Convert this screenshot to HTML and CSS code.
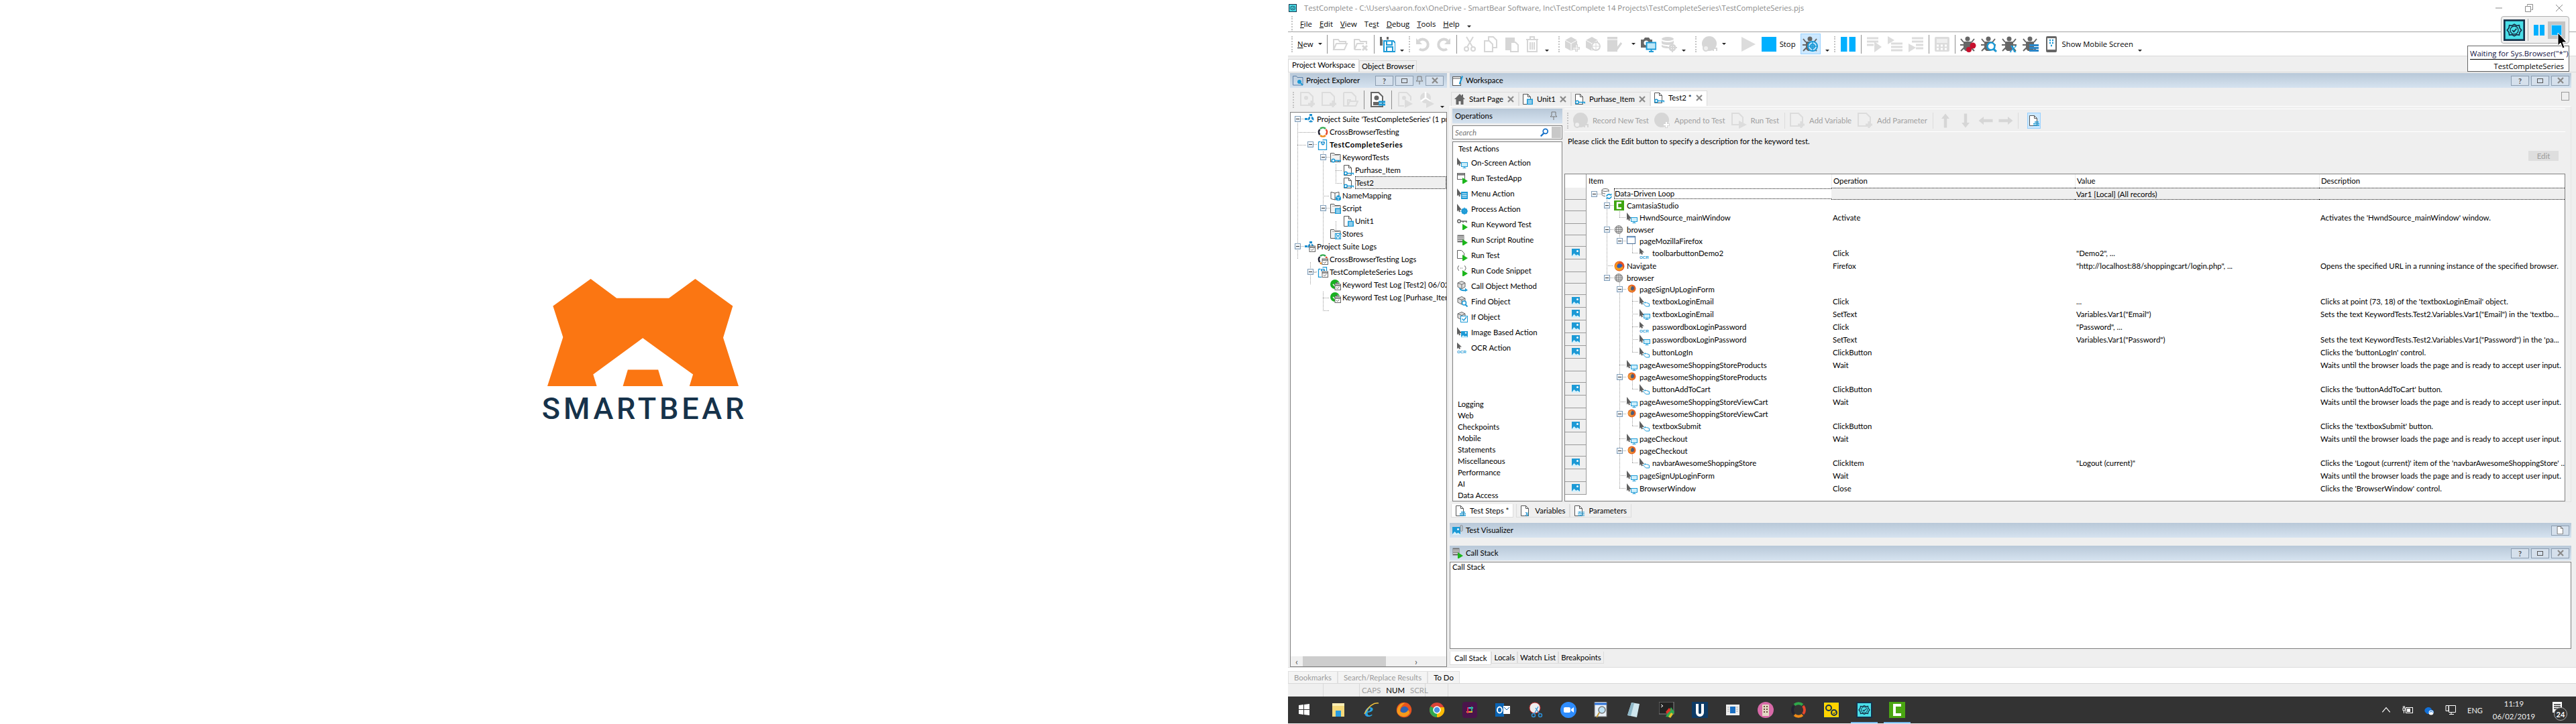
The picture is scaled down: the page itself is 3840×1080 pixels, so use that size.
FILE: index.html
```html
<!DOCTYPE html>
<html lang="en">
<head>
<meta charset="utf-8">
<title>TestComplete</title>
<link rel="stylesheet" href="styles.css">
</head>
<body>
<svg class="defs" width="0" height="0" aria-hidden="true">
<defs>
<!-- 16px primitives -->
<symbol id="cur" viewBox="0 0 16 16"><path d="M0 0v11.500l2-2 1 3 2-1-1-2.500h3z" fill="#5f5f5f"/><rect x="6.500" y="7.500" width="9" height="6" fill="#cdeefa" stroke="#1c9ad6"/><path d="M8.500 15.500h5M11 14v1.500" stroke="#1c9ad6"/></symbol>
<symbol id="screen" viewBox="0 0 16 16"><path d="M0 0v11.500l2-2 1 3 2-1-1-2.500h3z" fill="#5f5f5f"/><rect x="6.500" y="7.500" width="9" height="6" fill="#cdeefa" stroke="#1c9ad6"/><path d="M8.500 15.500h5M11 14v1.500" stroke="#1c9ad6"/></symbol>
<symbol id="hand" viewBox="0 0 16 16"><path d="M0 0v11.500l2-2 1 3 2-1-1-2.500h3z" fill="#5f5f5f"/><path d="M5.500 11l3-2.500v1.500l2-.5 4 1.500v4h-5z" fill="#fff" stroke="#1c9ad6"/></symbol>
<symbol id="ocr" viewBox="0 0 16 16"><path d="M0 0v9.500l2-2 1 2.500 2-1-1-2.500h3z" fill="#5f5f5f"/><text x="0" y="15.500" font-family="Liberation Sans" font-weight="700" font-size="6.200" fill="#1c9ad6">OCR</text></symbol>
<symbol id="gearcur" viewBox="0 0 16 16"><path d="M0 0v11.500l2-2 1 3 2-1-1-2.500h3z" fill="#5f5f5f"/><circle cx="11" cy="11" r="3.300" fill="none" stroke="#1c9ad6" stroke-width="2.600"/><path d="M11 5.500v11M5.500 11h11M7.500 7.500l7 7M14.500 7.500l-7 7" stroke="#1c9ad6" stroke-width="1.200"/></symbol>
<symbol id="menucur" viewBox="0 0 16 16"><path d="M0 0v11.500l2-2 1 3 2-1-1-2.500h3z" fill="#5f5f5f"/><rect x="6" y="5" width="10" height="11" fill="#1c9ad6"/><path d="M7.500 8h7M7.500 10.500h7M7.500 13h7" stroke="#fff"/></symbol>
<symbol id="imgcur" viewBox="0 0 16 16"><path d="M0 0v11.500l2-2 1 3 2-1-1-2.500h3z" fill="#5f5f5f"/><rect x="6" y="6" width="10" height="10" fill="#1c9ad6"/><circle cx="13" cy="8.500" r="1.200" fill="#fff"/><path d="M6 15l3-3 2.500 2 2-1 2.500 2v1H6z" fill="#cfeefa"/></symbol>
<symbol id="runapp" viewBox="0 0 16 16"><rect x=".500" y=".500" width="11" height="9" fill="#fff" stroke="#5f5f5f"/><path d="M1 2.500h10" stroke="#5f5f5f" stroke-width="2"/><path d="M8 7l8 5-8 5z" fill="#1cb61c"/></symbol>
<symbol id="runkey" viewBox="0 0 16 16"><circle cx="3" cy="3" r="2.300" fill="none" stroke="#5f5f5f" stroke-width="1.500"/><path d="M5 3h9v2M9 3v2" stroke="#5f5f5f" stroke-width="1.500" fill="none"/><path d="M8 7l8 5-8 5z" fill="#1cb61c"/></symbol>
<symbol id="runscript" viewBox="0 0 16 16"><rect x=".500" y=".500" width="10" height="11" fill="#777"/><path d="M1 3.500h9M1 6h9M1 8.500h9" stroke="#fff"/><path d="M8 7l8 5-8 5z" fill="#1cb61c"/></symbol>
<symbol id="rundoc" viewBox="0 0 16 16"><path d="M.5.500h6l4 4v8H.5z" fill="#fff" stroke="#5f5f5f"/><path d="M8 7l8 5-8 5z" fill="#1cb61c"/></symbol>
<symbol id="runsnip" viewBox="0 0 16 16"><path d="M3 .5c-2 0-1 3.500-2.500 3.500 1.500 0 .5 3.500 2.500 3.500M11 .5c2 0 1 3.500 2.500 3.500-1.500 0-.5 3.500-2.500 3.500" fill="none" stroke="#5f5f5f"/><path d="M5 4h4" stroke="#5f5f5f" stroke-dasharray="1 1"/><path d="M8 7l8 5-8 5z" fill="#1cb61c"/></symbol>
<symbol id="cube" viewBox="0 0 16 16"><path d="M1 3l6-2.500 5 2.500v6l-5 3-6-3z" fill="#ddd" stroke="#666"/><path d="M1 3l6 2.500 5-2.500M7 5.500v6" fill="none" stroke="#666"/></symbol>
<symbol id="callobj" viewBox="0 0 16 16"><use href="#cube" width="16" height="16"/><path d="M4 11c1 3 5 3.500 9 3" fill="none" stroke="#1c9ad6" stroke-width="2"/><path d="M12 10.500l4 3.500-4 2z" fill="#1c9ad6"/></symbol>
<symbol id="findobj" viewBox="0 0 16 16"><use href="#cube" width="16" height="16"/><circle cx="10.500" cy="10" r="3" fill="#fff" stroke="#1c9ad6" stroke-width="1.500"/><path d="M12.500 12.500l3 3" stroke="#1c9ad6" stroke-width="2"/></symbol>
<symbol id="ifobj" viewBox="0 0 16 16"><use href="#cube" width="16" height="16"/><rect x="5.500" y="6.500" width="10" height="9" fill="#fff" stroke="#1c9ad6"/><path d="M7.500 10.500l2.500 2.500 4-5" fill="none" stroke="#1c9ad6" stroke-width="1.500"/></symbol>
<symbol id="docbase" viewBox="0 0 16 16"><path d="M1.500.5h7l4 4v11h-11z" fill="#fff" stroke="#555"/><path d="M8.500.5v4h4" fill="none" stroke="#555"/></symbol>
<symbol id="dockey" viewBox="0 0 16 16"><use href="#docbase" width="16" height="16"/><circle cx="4" cy="12.500" r="2.300" fill="#fff" stroke="#1c9ad6" stroke-width="1.600"/><path d="M6 12.500h9.500v2M12 12.500v2" fill="none" stroke="#1c9ad6" stroke-width="1.600"/></symbol>
<symbol id="docscript" viewBox="0 0 16 16"><use href="#docbase" width="16" height="16"/><rect x="7" y="7.500" width="9" height="8.500" fill="#1c9ad6"/><path d="M8.500 10h6M8.500 12h6M8.500 14h6" stroke="#fff"/></symbol>
<symbol id="folder" viewBox="0 0 16 16"><path d="M.5 14.500V1.500h5l1.500 2h8v11z" fill="#f2f2f2" stroke="#555"/><path d="M3 4.500h10" stroke="#aaa"/></symbol>
<symbol id="fkey" viewBox="0 0 16 16"><use href="#folder" width="16" height="16"/><circle cx="4.500" cy="12.500" r="2.300" fill="#fff" stroke="#1c9ad6" stroke-width="1.600"/><path d="M6.500 12.500h9.500v2M12 12.500v2" fill="none" stroke="#1c9ad6" stroke-width="1.600"/></symbol>
<symbol id="fscript" viewBox="0 0 16 16"><use href="#folder" width="16" height="16"/><rect x="7" y="7.500" width="9" height="8.500" fill="#1c9ad6"/><path d="M8.500 10h6M8.500 12h6M8.500 14h6" stroke="#fff"/></symbol>
<symbol id="fstore" viewBox="0 0 16 16"><use href="#folder" width="16" height="16"/><rect x="7.500" y="7.500" width="8" height="8" fill="#fff" stroke="#1c9ad6" stroke-width="1.200"/><path d="M9.500 8v2.500h4V8M9.500 15v-3h4v3" fill="none" stroke="#1c9ad6"/></symbol>
<symbol id="book" viewBox="0 0 16 16"><path d="M1 2.500l6 1.500 6-1.500v10l-6 1.500-6-1.500z" fill="#fff" stroke="#555"/><path d="M7 4v10" stroke="#555"/><path d="M8 9l4-2 4 2v5l-4 2-4-2z" fill="#1c9ad6"/><path d="M8 9l4 2 4-2M12 11v5" fill="none" stroke="#fff" stroke-width=".8"/></symbol>
<symbol id="suite" viewBox="0 0 16 16"><circle cx="9" cy="8" r="4.500" fill="#1c8fd0"/><path d="M9 8V0M9 8l7 5M9 8L2 13" stroke="#fff" stroke-width="1.800"/><rect x="0" y="6" width="4" height="3" fill="#1c8fd0"/><rect x="7" y="0" width="4" height="3" fill="#1c8fd0"/></symbol>
<symbol id="cbt" viewBox="0 0 16 16"><g fill="none" stroke-width="2.600"><path d="M3.500 4a6 6 0 0 0 0 8" stroke="#223"/><path d="M4 3a6 6 0 0 1 8 0" stroke="#2fa84a"/><path d="M12.500 4a6 6 0 0 1 0 8" stroke="#e5482d"/><path d="M12 13a6 6 0 0 1-8 0" stroke="#ef8a17"/></g></symbol>
<symbol id="proj" viewBox="0 0 16 16"><path d="M1.500 3.500h3M1.500 3.500v12h12v-15h-6" fill="#fff" stroke="#1c9ad6" stroke-width="1.300"/><circle cx="8" cy="5.500" r="3" fill="#1c8fd0"/><path d="M8 5.500V2M8 5.500l3 2M8 5.500l-3 2" stroke="#fff"/></symbol>
<symbol id="cal" viewBox="0 0 16 16"><rect x="7" y="7" width="8.500" height="8.500" fill="#fff" stroke="#666"/><path d="M7 9h8.500" stroke="#666" stroke-width="1.500"/><path d="M9 12l1.500 1.500L13.500 11" fill="none" stroke="#666"/></symbol>
<symbol id="suitelog" viewBox="0 0 16 16"><use href="#suite" width="16" height="16"/><use href="#cal" width="16" height="16"/></symbol>
<symbol id="cbtlog" viewBox="0 0 16 16"><use href="#cbt" width="16" height="16"/><rect x="6" y="6" width="10" height="10" fill="#fff"/><use href="#cal" width="16" height="16"/></symbol>
<symbol id="projlog" viewBox="0 0 16 16"><use href="#proj" width="16" height="16"/><rect x="6" y="6" width="10" height="10" fill="#fff"/><use href="#cal" width="16" height="16"/></symbol>
<symbol id="oklog" viewBox="0 0 16 16"><circle cx="7" cy="7" r="7" fill="#18b020"/><path d="M4 7l3 3 5-6" fill="none" stroke="#fff" stroke-width="1.500"/><rect x="7" y="6" width="9" height="10" fill="#fff"/><path d="M9 3l4 3H8z" fill="#666"/><use href="#cal" width="16" height="16"/></symbol>
<symbol id="loop" viewBox="0 0 16 16"><ellipse cx="6" cy="2.500" rx="5" ry="2" fill="#fff" stroke="#666"/><path d="M1 2.500v7c0 1 2 2 5 2M11 2.500v3" fill="none" stroke="#666"/><path d="M1 6c0 1 2 2 5 2" fill="none" stroke="#666"/><path d="M8 12a3.500 3.500 0 0 1 6-2M15 12a3.500 3.500 0 0 1-6 2" fill="none" stroke="#1c9ad6" stroke-width="1.800"/><path d="M12.500 10.500h3v-3zM10.500 13.500h-3v3z" fill="#1c9ad6"/></symbol>
<symbol id="camt" viewBox="0 0 16 16"><rect width="15" height="15" fill="#3fa510"/><path d="M11 3.500H5v8h6" fill="none" stroke="#fff" stroke-width="2.400"/></symbol>
<symbol id="globe" viewBox="0 0 16 16"><circle cx="7" cy="7.500" r="5.800" fill="#ddd" stroke="#777"/><path d="M1.500 7.500h11M2 4.500h10M2 10.500h10M7 1.700v11.600M4.500 2.500c-1.500 3-1.500 7 0 10M9.500 2.500c1.500 3 1.500 7 0 10" fill="none" stroke="#777" stroke-width=".8"/></symbol>
<symbol id="win" viewBox="0 0 16 16"><rect x=".5" y=".5" width="12" height="11" fill="#fff" stroke="#4a6f99"/><path d="M1 2h11" stroke="#a9c6e6" stroke-width="2"/></symbol>
<symbol id="fox" viewBox="0 0 16 16"><circle cx="8" cy="8" r="7.500" fill="#e8531f"/><circle cx="8.500" cy="8.500" r="4" fill="#2f63b5"/><path d="M1 10c1 4 8 7 12 2 1-2 0-3-1-4-1 3-6 4-8 1 0-2 1-5 5-8C4 1 1 5 1 10z" fill="#f59a1c"/></symbol>
<symbol id="foxsm" viewBox="0 0 16 16"><circle cx="7.500" cy="6.500" r="6" fill="#e8601f"/><circle cx="8" cy="6" r="3" fill="#4a5e7c"/><path d="M2 7c1 4 7 6 10 2-3 2-6 1-6-2 0-2 1-3 2-5-3 0-6 2-6 5z" fill="#e99a3a"/></symbol>
<symbol id="img" viewBox="0 0 12 12"><rect width="12" height="12" fill="#1c9ad6"/><circle cx="8.500" cy="3.500" r="1.500" fill="#fff"/><path d="M0 11l3.500-4 3 3 2-1.500L12 11v1H0z" fill="#d7f1fb"/></symbol>
<symbol id="xmark" viewBox="0 0 10 10"><path d="M1 1l8 8M9 1l-8 8" stroke="#8a8a8a" stroke-width="2.200"/></symbol>
<symbol id="pin" viewBox="0 0 12 14"><path d="M3 1h6v5l2 2H1l2-2zM6 8v5" fill="none" stroke="#777"/></symbol>
<symbol id="home" viewBox="0 0 16 16"><path d="M8 0L0 8h2.500v8h4v-5h3v5h4V8H16l-3-3V1h-2v2z" fill="#666"/></symbol>
<symbol id="mag" viewBox="0 0 16 16"><circle cx="10" cy="5.500" r="4" fill="#fff" stroke="#1570c8" stroke-width="2"/><path d="M7 9l-5 5" stroke="#1570c8" stroke-width="2.500"/></symbol>
<symbol id="docsteps" viewBox="0 0 16 16"><use href="#docbase" width="16" height="16"/><path d="M9 10h6M7 12.500h9M7 15h9" stroke="#1c9ad6" stroke-width="1.500"/></symbol>
<symbol id="docvar" viewBox="0 0 16 16"><use href="#docbase" width="16" height="16"/><text x="7" y="16" font-family="Liberation Serif" font-style="italic" font-weight="700" font-size="12" fill="#1c9ad6">x</text></symbol>
<symbol id="docparam" viewBox="0 0 16 16"><use href="#docbase" width="16" height="16"/><path d="M6 10h10M6 12.500h10M6 15h10" stroke="#1c9ad6"/><path d="M9 9v2M13 11.500v2M10 14v2" stroke="#1c9ad6" stroke-width="1.500"/></symbol>
<symbol id="imgpaper" viewBox="0 0 16 16"><use href="#img" width="12" height="12" y="3"/><path d="M12 8V2a1.500 1.500 0 0 1 3 0v6a1.500 1.500 0 0 1-3 0" fill="none" stroke="#888"/></symbol>
<symbol id="explorer" viewBox="0 0 16 16"><path d="M.5 15V1.500h5l1.500 2h8V15z" fill="none" stroke="#5a7fa8"/><circle cx="10" cy="10" r="3" fill="#1c9ad6"/><path d="M12 12l3 3" stroke="#1c9ad6" stroke-width="2"/></symbol>
<symbol id="wspace" viewBox="0 0 16 16"><rect x=".5" y="2.500" width="12" height="13" fill="#fff" stroke="#555"/><path d="M1 5h11" stroke="#555"/><path d="M10 12L14 1l2 1-4 11-2 1z" fill="#1c9ad6"/></symbol>

<!-- 24px toolbar icons -->
<symbol id="t-open" viewBox="0 0 24 24"><path d="M2 20V5h7l2 3h9v3M2 20l4-9h16l-4 9z" fill="none" stroke="#d6d6d6" stroke-width="2"/></symbol>
<symbol id="t-close" viewBox="0 0 24 24"><path d="M2 20V5h7l2 3h9v4M2 20l4-9h10M2 20h10" fill="none" stroke="#d6d6d6" stroke-width="2"/><path d="M14 14l7 7M21 14l-7 7" stroke="#d6d6d6" stroke-width="3"/></symbol>
<symbol id="t-save" viewBox="0 0 24 24"><path d="M1 1h13v4h-9v9H1z" fill="#666"/><rect x="4" y="1" width="7" height="4" fill="#fff"/><path d="M7 7h14l3 3v13H7z" fill="#fff" stroke="#1c9ad6" stroke-width="2"/><path d="M11 8v5h8V8M11 22v-6h9v6" fill="none" stroke="#1c9ad6" stroke-width="2"/></symbol>
<symbol id="t-undo" viewBox="0 0 24 24"><path d="M6 7a8 8 0 1 1 1 12" fill="none" stroke="#d6d6d6" stroke-width="4"/><path d="M2 3v9h9z" fill="#d6d6d6"/></symbol>
<symbol id="t-redo" viewBox="0 0 24 24"><path d="M18 7a8 8 0 1 0-1 12" fill="none" stroke="#d6d6d6" stroke-width="4"/><path d="M22 3v9h-9z" fill="#d6d6d6"/></symbol>
<symbol id="t-cut" viewBox="0 0 24 24"><circle cx="7" cy="19" r="3" fill="none" stroke="#d6d6d6" stroke-width="2"/><circle cx="17" cy="19" r="3" fill="none" stroke="#d6d6d6" stroke-width="2"/><path d="M8 16L17 1M16 16L7 1" stroke="#d6d6d6" stroke-width="2"/></symbol>
<symbol id="t-copy" viewBox="0 0 24 24"><path d="M9 7V1h7l5 5v11h-6M3 7h7l5 5v11H3z" fill="none" stroke="#d6d6d6" stroke-width="2"/></symbol>
<symbol id="t-paste" viewBox="0 0 24 24"><rect x="3" y="2" width="14" height="19" fill="#d6d6d6"/><path d="M11 9h7l4 4v10H11z" fill="#fff" stroke="#d6d6d6" stroke-width="2"/></symbol>
<symbol id="t-trash" viewBox="0 0 24 24"><path d="M3 5h18M9 4V1h6v3M5 6v17h14V6M9 9v11M12 9v11M15 9v11" fill="none" stroke="#d6d6d6" stroke-width="2"/></symbol>
<symbol id="t-boxadd" viewBox="0 0 24 24"><path d="M1 6l9-5 9 5v11l-9 5-9-5z" fill="#d6d6d6"/><path d="M1 6l9 5 9-5M10 11v11" fill="none" stroke="#fff"/><path d="M18 12v11M12 18h11" stroke="#d6d6d6" stroke-width="4"/><path d="M18 13v9M13 18h9" stroke="#fff" stroke-width="1"/></symbol>
<symbol id="t-boxtgt" viewBox="0 0 24 24"><path d="M1 6l9-5 9 5v11l-9 5-9-5z" fill="#d6d6d6"/><path d="M1 6l9 5 9-5M10 11v11" fill="none" stroke="#fff"/><circle cx="16" cy="15" r="6" fill="#fff" stroke="#d6d6d6" stroke-width="2"/><path d="M16 8v14M9 15h14" stroke="#d6d6d6"/></symbol>
<symbol id="t-check" viewBox="0 0 24 24"><rect x="2" y="1" width="15" height="22" fill="#d6d6d6"/><path d="M10 15l5 6 8-11" fill="none" stroke="#d6d6d6" stroke-width="3"/><path d="M2 5h15" stroke="#fff"/></symbol>
<symbol id="t-cam" viewBox="0 0 24 24"><path d="M1 5h4l2-3h6l2 3h3v12H1z" fill="#666"/><circle cx="9" cy="10" r="3.500" fill="#fff"/><rect x="9.500" y="9.500" width="14" height="10" fill="#bfe8f8" stroke="#1c9ad6" stroke-width="2"/><path d="M13 23h7M16.500 20v3" stroke="#1c9ad6" stroke-width="2"/></symbol>
<symbol id="t-db" viewBox="0 0 24 24"><ellipse cx="10" cy="4" rx="9" ry="3" fill="#d6d6d6"/><path d="M1 6c0 2 4 3 9 3s9-1 9-3v4c0 2-4 3-9 3s-9-1-9-3zM1 12c0 2 4 3 9 3v3c-5 0-9-1-9-3z" fill="#d6d6d6"/><circle cx="17" cy="17" r="4" fill="none" stroke="#d6d6d6" stroke-width="3"/><path d="M17 10v14M10 17h14" stroke="#d6d6d6" stroke-width="2"/></symbol>
<symbol id="t-rec" viewBox="0 0 24 24"><circle cx="12" cy="11" r="11" fill="#d6d6d6"/><circle cx="7" cy="18" r="4" fill="#efefef" stroke="#d6d6d6" stroke-width="2"/><path d="M11 18h12v4M18 18v4" stroke="#d6d6d6" stroke-width="2" fill="none"/></symbol>
<symbol id="t-app" viewBox="0 0 24 24"><circle cx="11" cy="11" r="11" fill="#d6d6d6"/><path d="M18 12v11M12 18h11" stroke="#d6d6d6" stroke-width="4"/><path d="M18 14v8M14 18h8" stroke="#fff" stroke-width="2"/></symbol>
<symbol id="t-doc" viewBox="0 0 24 24"><path d="M2 1h10l6 6v11H2z" fill="#efefef" stroke="#dcdcdc" stroke-width="2"/><path d="M12 12l12 6-12 6z" fill="#dcdcdc"/></symbol>
<symbol id="t-var" viewBox="0 0 24 24"><path d="M2 1h12l6 6v13H2z" fill="none" stroke="#dcdcdc" stroke-width="2"/><path d="M18 13v10M13 18h10" stroke="#dcdcdc" stroke-width="3"/></symbol>
<symbol id="t-play" viewBox="0 0 24 24"><path d="M2 1l21 11L2 23z" fill="#dcdcdc"/></symbol>
<symbol id="t-stop" viewBox="0 0 24 24"><rect x="1" y="1" width="22" height="22" fill="#00b0ff"/></symbol>
<symbol id="t-pause" viewBox="0 0 24 24"><rect x="1" y="1" width="9.500" height="22" fill="#00b0ff"/><rect x="13.500" y="1" width="9.500" height="22" fill="#00b0ff"/></symbol>
<symbol id="t-bugbase" viewBox="0 0 24 24"><circle cx="11" cy="4" r="3.500" fill="#666"/><path d="M5 8h12v11l-3 3H8l-3-3z" fill="#666"/><path d="M1 4l4 5M21 4l-4 5M0 13h5M22 13h-5M1 22l5-5M21 22l-5-5" stroke="#666" stroke-width="2"/></symbol>
<symbol id="t-bugtgt" viewBox="0 0 24 24"><use href="#t-bugbase" width="24" height="24"/><circle cx="15" cy="15" r="7" fill="#cce8ff" stroke="#1c9ad6" stroke-width="2"/><circle cx="15" cy="15" r="3" fill="none" stroke="#1c9ad6" stroke-width="2"/><path d="M15 7v16M7 15h16" stroke="#1c9ad6" stroke-width="1.500"/></symbol>
<symbol id="t-bugred" viewBox="0 0 24 24"><use href="#t-bugbase" width="24" height="24"/><circle cx="19" cy="14" r="4.500" fill="#c8102e"/><circle cx="13" cy="20" r="4" fill="#c8102e"/></symbol>
<symbol id="t-bugq" viewBox="0 0 24 24"><use href="#t-bugbase" width="24" height="24"/><circle cx="15" cy="15" r="5.500" fill="#fff" stroke="#1c9ad6" stroke-width="2.500"/><path d="M19 19l4 4" stroke="#1c9ad6" stroke-width="3"/></symbol>
<symbol id="t-bugx" viewBox="0 0 24 24"><use href="#t-bugbase" width="24" height="24"/><text x="12" y="24" font-family="Liberation Serif" font-style="italic" font-weight="700" font-size="20" fill="#1c9ad6">x</text></symbol>
<symbol id="t-bugdb" viewBox="0 0 24 24"><use href="#t-bugbase" width="24" height="24"/><path d="M10 12h14v3H10zM10 16h14v3H10zM10 20h14v3H10z" fill="#2a86c8"/></symbol>
<symbol id="t-over" viewBox="0 0 24 24"><path d="M1 3h17M1 8h17M1 13h10" stroke="#dcdcdc" stroke-width="3"/><path d="M12 8l11 8-11 8z" fill="#dcdcdc"/></symbol>
<symbol id="t-into" viewBox="0 0 24 24"><path d="M1 0l10 6-10 6z" fill="#dcdcdc"/><path d="M6 11h17M6 16h17M6 21h17" stroke="#dcdcdc" stroke-width="3"/></symbol>
<symbol id="t-out" viewBox="0 0 24 24"><path d="M6 3h17M6 8h17M12 13h11M12 18h11" stroke="#dcdcdc" stroke-width="3"/><path d="M1 11l11 6-11 7z" fill="#dcdcdc"/></symbol>
<symbol id="t-calc" viewBox="0 0 24 24"><rect x="1" y="1" width="22" height="22" rx="2" fill="#dcdcdc"/><rect x="4" y="4" width="16" height="6" fill="#efefef"/><path d="M4 14h3M10 14h3M16 14h3M4 19h3M10 19h3M16 19h3" stroke="#fff" stroke-width="3"/></symbol>
<symbol id="t-phone" viewBox="0 0 24 24"><rect x="4" y="0" width="16" height="24" rx="2" fill="#666"/><rect x="6" y="3" width="12" height="17" fill="#fff"/><path d="M9 6h2M13 6h2M9 10h2M13 10h2M11 14h2" stroke="#1c9ad6" stroke-width="2.400"/></symbol>
<symbol id="t-step" viewBox="0 0 24 24"><path d="M2 1h11l6 6v15H2z" fill="#fff" stroke="#666" stroke-width="2"/><circle cx="10" cy="9" r="3.500" fill="#666"/><path d="M5 20V15h9v5" fill="#666"/><path d="M13 15h10M13 19h10" stroke="#1c9ad6" stroke-width="3"/></symbol>
<symbol id="t-newit" viewBox="0 0 24 24"><path d="M2 1h12l6 6v13H2z" fill="none" stroke="#dcdcdc" stroke-width="2"/><circle cx="10" cy="9" r="3" fill="#dcdcdc"/><path d="M18 13v10M13 18h10" stroke="#dcdcdc" stroke-width="3"/></symbol>
<symbol id="t-newdoc" viewBox="0 0 24 24"><path d="M2 1h12l6 6v13H2z" fill="none" stroke="#dcdcdc" stroke-width="2"/><path d="M18 13v10M13 18h10" stroke="#dcdcdc" stroke-width="3"/></symbol>
<symbol id="t-openit" viewBox="0 0 24 24"><path d="M2 1h12l6 6v6M2 1v20h6" fill="none" stroke="#dcdcdc" stroke-width="2"/><path d="M8 21l3-7h12l-3 7zM8 21v-9h5" fill="none" stroke="#dcdcdc" stroke-width="2"/></symbol>
<symbol id="t-runit" viewBox="0 0 24 24"><path d="M2 1h12l6 6v6M2 1v20h8" fill="none" stroke="#dcdcdc" stroke-width="2"/><circle cx="10" cy="9" r="3" fill="#dcdcdc"/><path d="M11 11l12 7-12 6z" fill="#dcdcdc"/></symbol>
<symbol id="t-runtc" viewBox="0 0 24 24"><circle cx="10" cy="9" r="8" fill="#dcdcdc"/><path d="M10 9V0M10 9l7 5M10 9l-7 5" stroke="#fff" stroke-width="2.500"/><path d="M11 11l12 7-12 6z" fill="#dcdcdc"/></symbol>
<symbol id="a-up" viewBox="0 0 16 16"><path d="M8 1l4 5H9.500v9h-3V6H4z" fill="#d6d6d6"/></symbol>
<symbol id="a-down" viewBox="0 0 16 16"><path d="M8 15l4-5H9.500V1h-3v9H4z" fill="#d6d6d6"/></symbol>
<symbol id="a-left" viewBox="0 0 16 16"><path d="M1 8l5-4v2.500h9v3H6V12z" fill="#d6d6d6"/></symbol>
<symbol id="a-right" viewBox="0 0 16 16"><path d="M15 8l-5-4v2.500H1v3h9V12z" fill="#d6d6d6"/></symbol>
<symbol id="tc" viewBox="0 0 24 24"><rect x="1" y="1" width="22" height="22" fill="#4adfe9" stroke="#16324a" stroke-width="2"/><path d="M12 4l2.500 1.500 3-.5.5 3 2 2.500-2 2.500-.5 3-3-.5L12 17l-2.500-1.500-3 .5-.5-3-2-2.500 2-2.500.5-3 3 .5z" fill="none" stroke="#16324a" stroke-width="1.300" transform="translate(0 1.500)"/><circle cx="12" cy="12" r="4.500" fill="none" stroke="#16324a"/><path d="M9.800 12l1.700 1.800 3-3.500" fill="none" stroke="#16324a" stroke-width="1.300"/></symbol>
</defs>
</svg>

<main class="desktop">
  <section class="splash">
    <div class="brand">
      <svg class="bear" viewBox="108 107 856 480" role="img" aria-label="SmartBear logo">
        <path fill="#fb7612" fill-rule="evenodd" d="M302 107L418 193H652L770 107L938 228L895 370L964 587H744L760 535L535 372L313 535L329 587H108L178 368L133 228Z"/>
        <path fill="#fb7612" d="M468 514H604L626 587H446Z"/>
      </svg>
      <div class="wordmark">SMARTBEAR</div>
    </div>
  </section>

  <section class="app">
    <header class="title">
      <svg class="i12"><use href="#tc"/></svg>
      <span>TestComplete - C:\Users\aaron.fox\OneDrive - SmartBear Software, Inc\TestComplete 14 Projects\TestCompleteSeries\TestCompleteSeries.pjs</span>
      <div class="winbtns">
        <svg class="wb" viewBox="0 0 12 12"><path d="M1 6h10" stroke="#8a8a8a"/></svg>
        <svg class="wb" viewBox="0 0 12 12"><path d="M3.500 2.500V.5h8v8h-2M.5 3.500h8v8h-8z" fill="none" stroke="#8a8a8a"/></svg>
        <svg class="wb" viewBox="0 0 12 12"><path d="M1 1l10 10M11 1L1 11" stroke="#8a8a8a"/></svg>
      </div>
    </header>

    <nav class="menubar">
      <i class="grip"></i>
      <span><u>F</u>ile</span><span><u>E</u>dit</span><span><u>V</u>iew</span><span>Te<u>s</u>t</span><span><u>D</u>ebug</span><span><u>T</u>ools</span><span><u>H</u>elp</span>
      <i class="arr low"></i>
    </nav>

    <div class="tools">
      <i class="grip"></i>
      <span class="tt"><u>N</u>ew</span><i class="arr"></i><i class="sep"></i>
      <svg class="i24"><use href="#t-open"/></svg><svg class="i24"><use href="#t-close"/></svg><i class="sep"></i>
      <svg class="i24"><use href="#t-save"/></svg><i class="arr low"></i><i class="grip"></i>
      <svg class="i24"><use href="#t-undo"/></svg><svg class="i24"><use href="#t-redo"/></svg><i class="sep"></i>
      <svg class="i24"><use href="#t-cut"/></svg><svg class="i24"><use href="#t-copy"/></svg><svg class="i24"><use href="#t-paste"/></svg><svg class="i24"><use href="#t-trash"/></svg><i class="arr low"></i><i class="grip gx"></i>
      <svg class="i24"><use href="#t-boxadd"/></svg><svg class="i24"><use href="#t-boxtgt"/></svg><svg class="i24"><use href="#t-check"/></svg><i class="arr gx"></i>
      <svg class="i24"><use href="#t-cam"/></svg><svg class="i24"><use href="#t-db"/></svg><i class="arr low"></i><i class="grip gx"></i>
      <svg class="i24"><use href="#t-rec"/></svg><i class="arr"></i>
      <svg class="i24 gxx"><use href="#t-play"/></svg><svg class="i24"><use href="#t-stop"/></svg>
      <span class="tt tight">Stop</span>
      <span class="hot"><svg class="i24"><use href="#t-bugtgt"/></svg></span><i class="arr low"></i><i class="grip"></i>
      <svg class="i24"><use href="#t-pause"/></svg><i class="sep"></i>
      <svg class="i24"><use href="#t-over"/></svg><svg class="i24"><use href="#t-into"/></svg><svg class="i24"><use href="#t-out"/></svg><i class="sep"></i>
      <svg class="i24"><use href="#t-calc"/></svg><i class="sep"></i>
      <svg class="i24"><use href="#t-bugred"/></svg><svg class="i24"><use href="#t-bugq"/></svg><svg class="i24"><use href="#t-bugx"/></svg><svg class="i24"><use href="#t-bugdb"/></svg>
      <svg class="i24"><use href="#t-phone"/></svg>
      <span class="tt tight">Show Mobile Screen</span><i class="arr low"></i>
    </div>

    <div class="perspectives">
      <span class="ptab on">Project Workspace</span><span class="ptab">Object Browser</span>
    </div>

    <div class="docks">
      <aside class="left">
        <div class="hdr"><svg class="i16"><use href="#explorer"/></svg><span>Project Explorer</span>
          <div class="hbtns close"><b class="hb">?</b><b class="hb"><i class="box"></i></b><svg class="pin"><use href="#pin"/></svg><b class="hb"><svg class="x"><use href="#xmark"/></svg></b></div>
        </div>
        <div class="ptools">
          <i class="grip"></i>
          <svg class="i24"><use href="#t-newit"/></svg><svg class="i24"><use href="#t-newdoc"/></svg><svg class="i24"><use href="#t-openit"/></svg><i class="sep"></i>
          <svg class="i24"><use href="#t-step"/></svg><i class="sep"></i>
          <svg class="i24"><use href="#t-runit"/></svg><svg class="i24"><use href="#t-runtc"/></svg><i class="arr low"></i>
        </div>
        <div class="tree">
          <svg class="treelines" width="90" height="450"><path d="M10 15V219M10 29H38M10 48H24M48 58V200M48 124H57M48 200H57M67 77V105M67 86H76M67 105H76M67 162V181M67 181H76M29 223V257M29 238H38M48 267V295M48 276H57M48 295H57"/></svg>
          <div class="row l0"><i class="tg"></i><svg class="i16"><use href="#suite"/></svg><span>Project Suite 'TestCompleteSeries' (1 pro</span></div>
          <div class="row l1"><i class="tg none"></i><svg class="i16"><use href="#cbt"/></svg><span>CrossBrowserTesting</span></div>
          <div class="row l1"><i class="tg"></i><svg class="i16"><use href="#proj"/></svg><b>TestCompleteSeries</b></div>
          <div class="row l2"><i class="tg"></i><svg class="i16"><use href="#fkey"/></svg><span>KeywordTests</span></div>
          <div class="row l3"><i class="tg none"></i><svg class="i16"><use href="#dockey"/></svg><span>Purhase_Item</span></div>
          <div class="row l3"><i class="tg none"></i><svg class="i16"><use href="#dockey"/></svg><span class="sel">Test2</span></div>
          <div class="row l2"><i class="tg none"></i><svg class="i16"><use href="#book"/></svg><span>NameMapping</span></div>
          <div class="row l2"><i class="tg"></i><svg class="i16"><use href="#fscript"/></svg><span>Script</span></div>
          <div class="row l3"><i class="tg none"></i><svg class="i16"><use href="#docscript"/></svg><span>Unit1</span></div>
          <div class="row l2"><i class="tg none"></i><svg class="i16"><use href="#fstore"/></svg><span>Stores</span></div>
          <div class="row l0"><i class="tg"></i><svg class="i16"><use href="#suitelog"/></svg><span>Project Suite Logs</span></div>
          <div class="row l1"><i class="tg none"></i><svg class="i16"><use href="#cbtlog"/></svg><span>CrossBrowserTesting Logs</span></div>
          <div class="row l1"><i class="tg"></i><svg class="i16"><use href="#projlog"/></svg><span>TestCompleteSeries Logs</span></div>
          <div class="row l2"><i class="tg none"></i><svg class="i16"><use href="#oklog"/></svg><span>Keyword Test Log [Test2] 06/02</span></div>
          <div class="row l2"><i class="tg none"></i><svg class="i16"><use href="#oklog"/></svg><span>Keyword Test Log [Purhase_Iter</span></div>
          <div class="hscroll"><span class="sa">‹</span><i class="thumb"></i><span class="sa right">›</span></div>
        </div>
      </aside>

      <div class="right">
        <div class="hdr"><svg class="i16"><use href="#wspace"/></svg><span>Workspace</span>
          <div class="hbtns"><b class="hb">?</b><b class="hb"><i class="box"></i></b><b class="hb"><svg class="x"><use href="#xmark"/></svg></b></div>
        </div>
        <div class="doctabs">
          <span class="dtab"><svg class="i16"><use href="#home"/></svg>Start Page<svg class="x"><use href="#xmark"/></svg></span>
          <span class="dtab"><svg class="i16"><use href="#docscript"/></svg>Unit1<svg class="x"><use href="#xmark"/></svg></span>
          <span class="dtab"><svg class="i16"><use href="#dockey"/></svg>Purhase_Item<svg class="x"><use href="#xmark"/></svg></span>
          <span class="dtab on"><svg class="i16"><use href="#dockey"/></svg>Test2 *<svg class="x"><use href="#xmark"/></svg></span>
          <i class="tabdrop"></i>
        </div>
        <div class="editor">
          <div class="ops">
            <div class="ophdr"><span>Operations</span><svg class="pin"><use href="#pin"/></svg></div>
            <div class="search"><em>Search</em><svg class="i14"><use href="#mag"/></svg><i class="dd"></i></div>
            <div class="oplist">
              <div class="opcat">Test Actions</div>
              <div class="op"><svg class="i16"><use href="#screen"/></svg>On-Screen Action</div>
              <div class="op"><svg class="i16"><use href="#runapp"/></svg>Run TestedApp</div>
              <div class="op"><svg class="i16"><use href="#menucur"/></svg>Menu Action</div>
              <div class="op"><svg class="i16"><use href="#gearcur"/></svg>Process Action</div>
              <div class="op"><svg class="i16"><use href="#runkey"/></svg>Run Keyword Test</div>
              <div class="op"><svg class="i16"><use href="#runscript"/></svg>Run Script Routine</div>
              <div class="op"><svg class="i16"><use href="#rundoc"/></svg>Run Test</div>
              <div class="op"><svg class="i16"><use href="#runsnip"/></svg>Run Code Snippet</div>
              <div class="op"><svg class="i16"><use href="#callobj"/></svg>Call Object Method</div>
              <div class="op"><svg class="i16"><use href="#findobj"/></svg>Find Object</div>
              <div class="op"><svg class="i16"><use href="#ifobj"/></svg>If Object</div>
              <div class="op"><svg class="i16"><use href="#imgcur"/></svg>Image Based Action</div>
              <div class="op"><svg class="i16"><use href="#ocr"/></svg>OCR Action</div>
              <div class="cats">
                <div>Logging</div><div>Web</div><div>Checkpoints</div><div>Mobile</div><div>Statements</div><div>Miscellaneous</div><div>Performance</div><div>AI</div><div>Data Access</div>
              </div>
            </div>
          </div>
          <div class="kw">
            <div class="kwtools">
              <i class="grip"></i>
              <span class="kb"><svg class="i24"><use href="#t-rec"/></svg>Record New Test</span>
              <span class="kb"><svg class="i24"><use href="#t-app"/></svg>Append to Test</span>
              <span class="kb"><svg class="i24"><use href="#t-doc"/></svg>Run Test</span>
              <i class="sep"></i>
              <span class="kb"><svg class="i24"><use href="#t-var"/></svg>Add Variable</span>
              <span class="kb"><svg class="i24"><use href="#t-newdoc"/></svg>Add Parameter</span>
              <i class="sep"></i>
              <svg class="i24"><use href="#a-up"/></svg><svg class="i24"><use href="#a-down"/></svg><svg class="i24"><use href="#a-left"/></svg><svg class="i24"><use href="#a-right"/></svg>
              <i class="sep"></i>
              <span class="hot small gx"><svg class="i16"><use href="#docsteps"/></svg></span>
            </div>
            <div class="kwdesc">
              <div>Please click the Edit button to specify a description for the keyword test.</div>
              <div class="editrow"><span class="editbtn">Edit</span></div>
            </div>
            <div class="grid">
              <div class="ghead"><span class="gc"></span><span>Item</span><span class="col">Operation</span><span class="col">Value</span><span class="col">Description</span></div>
              <div class="gbody">
                <svg class="gridlines" width="120" height="460"><path d="M62 14V134M62 116.500H71M81 31V44.500M81 44.500H90M81 67V75M100 84V97.500M100 97.500H109M81 139V448.500M81 264.500H90M81 319.500H90M81 374.500H90M81 429.500H90M81 448.500H90M100 156V245.500M100 169.500H109M100 188.500H109M100 207.500H109M100 226.500H109M100 245.500H109M100 287V300.500M100 300.500H109M100 342V355.500M100 355.500H109M100 397V410.500M100 410.500H109"/></svg>

                <div class="gr h18 cur"><span class="gc"></span><span class="it l0"><i class="tg"></i><svg class="i16"><use href="#loop"/></svg><span>Data-Driven Loop</span></span><span></span><span>Var1 [Local] (All records)</span><span></span></div>
                <div class="gr h17"><span class="gc"></span><span class="it l1"><i class="tg"></i><svg class="i16"><use href="#camt"/></svg><span>CamtasiaStudio</span></span><span></span><span></span><span></span></div>
                <div class="gr h19"><span class="gc"></span><span class="it l2"><i class="tg none"></i><svg class="i16"><use href="#screen"/></svg><span>HwndSource_mainWindow</span></span><span>Activate</span><span></span><span>Activates the 'HwndSource_mainWindow' window.</span></div>
                <div class="gr h17"><span class="gc"></span><span class="it l1"><i class="tg"></i><svg class="i16"><use href="#globe"/></svg><span>browser</span></span><span></span><span></span><span></span></div>
                <div class="gr h17"><span class="gc"></span><span class="it l2"><i class="tg"></i><svg class="i16"><use href="#win"/></svg><span>pageMozillaFirefox</span></span><span></span><span></span><span></span></div>
                <div class="gr h19"><span class="gc"><svg class="i12"><use href="#img"/></svg></span><span class="it l3"><i class="tg none"></i><svg class="i16"><use href="#ocr"/></svg><span>toolbarbuttonDemo2</span></span><span>Click</span><span>"Demo2", ...</span><span></span></div>
                <div class="gr h19"><span class="gc"></span><span class="it l1"><i class="tg none"></i><svg class="i16"><use href="#fox"/></svg><span>Navigate</span></span><span>Firefox</span><span>"http://localhost:88/shoppingcart/login.php", ...</span><span>Opens the specified URL in a running instance of the specified browser.</span></div>
                <div class="gr h17"><span class="gc"></span><span class="it l1"><i class="tg"></i><svg class="i16"><use href="#globe"/></svg><span>browser</span></span><span></span><span></span><span></span></div>
                <div class="gr h17"><span class="gc"></span><span class="it l2"><i class="tg"></i><svg class="i16"><use href="#foxsm"/></svg><span>pageSignUpLoginForm</span></span><span></span><span></span><span></span></div>
                <div class="gr h19"><span class="gc"><svg class="i12"><use href="#img"/></svg></span><span class="it l3"><i class="tg none"></i><svg class="i16"><use href="#hand"/></svg><span>textboxLoginEmail</span></span><span>Click</span><span>...</span><span>Clicks at point (73, 18) of the 'textboxLoginEmail' object.</span></div>
                <div class="gr h19"><span class="gc"><svg class="i12"><use href="#img"/></svg></span><span class="it l3"><i class="tg none"></i><svg class="i16"><use href="#screen"/></svg><span>textboxLoginEmail</span></span><span>SetText</span><span>Variables.Var1("Email")</span><span>Sets the text KeywordTests.Test2.Variables.Var1("Email") in the 'textbo...</span></div>
                <div class="gr h19"><span class="gc"><svg class="i12"><use href="#img"/></svg></span><span class="it l3"><i class="tg none"></i><svg class="i16"><use href="#ocr"/></svg><span>passwordboxLoginPassword</span></span><span>Click</span><span>"Password", ...</span><span></span></div>
                <div class="gr h19"><span class="gc"><svg class="i12"><use href="#img"/></svg></span><span class="it l3"><i class="tg none"></i><svg class="i16"><use href="#screen"/></svg><span>passwordboxLoginPassword</span></span><span>SetText</span><span>Variables.Var1("Password")</span><span>Sets the text KeywordTests.Test2.Variables.Var1("Password") in the 'pa...</span></div>
                <div class="gr h19"><span class="gc"><svg class="i12"><use href="#img"/></svg></span><span class="it l3"><i class="tg none"></i><svg class="i16"><use href="#hand"/></svg><span>buttonLogIn</span></span><span>ClickButton</span><span></span><span>Clicks the 'buttonLogIn' control.</span></div>
                <div class="gr h19"><span class="gc"></span><span class="it l2"><i class="tg none"></i><svg class="i16"><use href="#screen"/></svg><span>pageAwesomeShoppingStoreProducts</span></span><span>Wait</span><span></span><span>Waits until the browser loads the page and is ready to accept user input.</span></div>
                <div class="gr h17"><span class="gc"></span><span class="it l2"><i class="tg"></i><svg class="i16"><use href="#foxsm"/></svg><span>pageAwesomeShoppingStoreProducts</span></span><span></span><span></span><span></span></div>
                <div class="gr h19"><span class="gc"><svg class="i12"><use href="#img"/></svg></span><span class="it l3"><i class="tg none"></i><svg class="i16"><use href="#hand"/></svg><span>buttonAddToCart</span></span><span>ClickButton</span><span></span><span>Clicks the 'buttonAddToCart' button.</span></div>
                <div class="gr h19"><span class="gc"></span><span class="it l2"><i class="tg none"></i><svg class="i16"><use href="#screen"/></svg><span>pageAwesomeShoppingStoreViewCart</span></span><span>Wait</span><span></span><span>Waits until the browser loads the page and is ready to accept user input.</span></div>
                <div class="gr h17"><span class="gc"></span><span class="it l2"><i class="tg"></i><svg class="i16"><use href="#foxsm"/></svg><span>pageAwesomeShoppingStoreViewCart</span></span><span></span><span></span><span></span></div>
                <div class="gr h19"><span class="gc"><svg class="i12"><use href="#img"/></svg></span><span class="it l3"><i class="tg none"></i><svg class="i16"><use href="#hand"/></svg><span>textboxSubmit</span></span><span>ClickButton</span><span></span><span>Clicks the 'textboxSubmit' button.</span></div>
                <div class="gr h19"><span class="gc"></span><span class="it l2"><i class="tg none"></i><svg class="i16"><use href="#screen"/></svg><span>pageCheckout</span></span><span>Wait</span><span></span><span>Waits until the browser loads the page and is ready to accept user input.</span></div>
                <div class="gr h17"><span class="gc"></span><span class="it l2"><i class="tg"></i><svg class="i16"><use href="#foxsm"/></svg><span>pageCheckout</span></span><span></span><span></span><span></span></div>
                <div class="gr h19"><span class="gc"><svg class="i12"><use href="#img"/></svg></span><span class="it l3"><i class="tg none"></i><svg class="i16"><use href="#hand"/></svg><span>navbarAwesomeShoppingStore</span></span><span>ClickItem</span><span>"Logout (current)"</span><span>Clicks the 'Logout (current)' item of the 'navbarAwesomeShoppingStore' ...</span></div>
                <div class="gr h19"><span class="gc"></span><span class="it l2"><i class="tg none"></i><svg class="i16"><use href="#screen"/></svg><span>pageSignUpLoginForm</span></span><span>Wait</span><span></span><span>Waits until the browser loads the page and is ready to accept user input.</span></div>
                <div class="gr h19"><span class="gc"><svg class="i12"><use href="#img"/></svg></span><span class="it l2"><i class="tg none"></i><svg class="i16"><use href="#cur"/></svg><span>BrowserWindow</span></span><span>Close</span><span></span><span>Clicks the 'BrowserWindow' control.</span></div>
              </div>
            </div>
          </div>
        </div>
        <div class="subtabs">
          <span class="stab on"><svg class="i16"><use href="#docsteps"/></svg>Test Steps *</span>
          <span class="stab"><svg class="i16"><use href="#docvar"/></svg>Variables</span>
          <span class="stab"><svg class="i16"><use href="#docparam"/></svg>Parameters</span>
        </div>
        <div class="hdr vis"><svg class="i16"><use href="#imgpaper"/></svg><span>Test Visualizer</span><div class="hbtns"><b class="hb wide"><svg class="i12"><use href="#docbase"/></svg></b></div></div>
        <div class="hdr stack"><svg class="i16"><use href="#runscript"/></svg><span>Call Stack</span>
          <div class="hbtns"><b class="hb">?</b><b class="hb"><i class="box"></i></b><b class="hb"><svg class="x"><use href="#xmark"/></svg></b></div>
        </div>
        <div class="stackbox">Call Stack</div>
        <div class="btabs"><span class="btab on">Call Stack</span><span class="btab">Locals</span><span class="btab">Watch List</span><span class="btab">Breakpoints</span></div>
      </div>
    </div>

    <div class="results">
      <span class="rtab off">Bookmarks</span><span class="rtab off">Search/Replace Results</span><span class="rtab">To Do</span>
    </div>
    <div class="status">
      <span class="st w1"></span><span class="st w2"></span>
      <span class="st w3"><em>CAPS</em><span>NUM</span><em>SCRL</em></span>
      <span class="st w4"></span>
    </div>

    <footer class="taskbar">
      <svg class="tk win10" viewBox="0 0 24 24"><path d="M4 5l7-1v7H4zM12 4l8-1v8h-8zM4 12h7v7l-7-1zM12 12h8v8l-8-1z" fill="#fff"/></svg>
      <svg class="tk" viewBox="0 0 24 24"><path d="M3 2h18v20H3z" fill="#f5d97a"/><path d="M3 2h18v4H3z" fill="#fbeeb5"/><path d="M8 22v-9h8v9z" fill="#2a9de0"/></svg>
      <svg class="tk" viewBox="0 0 24 24"><text x="2" y="22" font-family="Liberation Serif" font-style="italic" font-weight="700" font-size="30" fill="#2aa3e6">e</text><path d="M2 18C8 6 16 1 23 2" fill="none" stroke="#f0c23c" stroke-width="1.500"/></svg>
      <svg class="tk" viewBox="0 0 16 16"><use href="#fox"/></svg>
      <svg class="tk" viewBox="0 0 24 24"><circle cx="12" cy="12" r="11" fill="#db4437"/><path d="M12 12L2.500 6.500A11 11 0 0 0 12 23z" fill="#2fa84f"/><path d="M12 12v11A11 11 0 0 0 22.500 8H12z" fill="#fbbc05"/><circle cx="12" cy="12" r="5" fill="#4a90e2" stroke="#fff" stroke-width="1.500"/></svg>
      <svg class="tk" viewBox="0 0 24 24"><rect x="1" width="22" height="24" rx="4" fill="#4a154b"/><path d="M8 9h9" stroke="#36c5f0" stroke-width="2"/><path d="M15 7v9" stroke="#2eb67d" stroke-width="2"/><path d="M7 15h9" stroke="#ecb22e" stroke-width="2"/><path d="M9 8v9" stroke="#e01e5a" stroke-width="2"/></svg>
      <svg class="tk" viewBox="0 0 24 24"><rect x="1" y="2" width="13" height="20" fill="#0a64b4"/><rect x="13" y="6" width="10" height="12" fill="#fff"/><path d="M14 8l4 4 4-4" fill="none" stroke="#0a64b4"/><ellipse cx="7.500" cy="12" rx="3.500" ry="4.500" fill="none" stroke="#fff" stroke-width="2"/></svg>
      <svg class="tk" viewBox="0 0 24 24"><circle cx="11" cy="9" r="8" fill="#eee" stroke="#c33"/><circle cx="9" cy="20" r="2.500" fill="none" stroke="#2a8fd6" stroke-width="1.500"/><circle cx="19" cy="20" r="2.500" fill="none" stroke="#2a8fd6" stroke-width="1.500"/><path d="M10 18L16 7M18 18L12 9" stroke="#2a8fd6" stroke-width="1.200"/></svg>
      <svg class="tk" viewBox="0 0 24 24"><circle cx="12" cy="12" r="12" fill="#2d8cff"/><rect x="5" y="8" width="10" height="8" rx="2" fill="#fff"/><path d="M16 11l4-3v8l-4-3z" fill="#fff"/></svg>
      <svg class="tk" viewBox="0 0 24 24"><rect x="2" y="0" width="18" height="22" fill="#e8f0f8" stroke="#777"/><path d="M2 3h18" stroke="#2a6fd6" stroke-width="3"/><circle cx="13" cy="12" r="5" fill="#bfe2f5" stroke="#777" stroke-width="1.500"/><path d="M9 16l-4 7" stroke="#c19a3c" stroke-width="2"/></svg>
      <svg class="tk" viewBox="0 0 24 24"><path d="M8 1l12 2-4 20-14-3z" fill="#cfe6ee"/><path d="M8 1l4 1-5 19-5-1z" fill="#8fb8c8"/></svg>
      <svg class="tk" viewBox="0 0 24 24"><rect x="0" y="0" width="22" height="18" fill="#222" stroke="#888"/><path d="M3 4l3 2-3 2" fill="none" stroke="#fff"/><path d="M10 22l8-14 5 7-5 8z" fill="#2fa84f"/><path d="M10 15l5-6 3 3-6 6z" fill="#e0352b"/><path d="M14 22l4-6 3 2-4 6z" fill="#e8c12c"/></svg>
      <svg class="tk" viewBox="0 0 24 24"><rect width="24" height="24" fill="#0d3b66"/><path d="M6 3v13a6 6 0 0 0 12 0V3h-4v13a2 2 0 0 1-4 0V3z" fill="#fff"/></svg>
      <svg class="tk" viewBox="0 0 24 24"><rect x="2" y="4" width="20" height="16" fill="#eee"/><rect x="8" y="7" width="8" height="10" fill="#1b6fc2"/><path d="M4 8h3M4 11h3M4 14h3M17 8h3M17 11h3M17 14h3" stroke="#aaa"/></svg>
      <svg class="tk" viewBox="0 0 24 24"><circle cx="12" cy="12" r="12" fill="#d86aa8"/><rect x="7" y="4" width="10" height="17" fill="#e3d8c4"/><path d="M9 7h2M13 7h2M9 11h2M13 11h2M9 15h2M13 15h2" stroke="#6a4a3c" stroke-width="2"/></svg>
      <svg class="tk" viewBox="0 0 16 16"><use href="#cbt"/></svg>
      <svg class="tk" viewBox="0 0 24 24"><rect width="24" height="24" fill="#ffd400" stroke="#16324a" stroke-width="2"/><circle cx="8" cy="9" r="4" fill="none" stroke="#16324a" stroke-width="2"/><circle cx="16" cy="16" r="4" fill="none" stroke="#16324a" stroke-width="2"/><path d="M14 16l2 2 3-4" fill="none" stroke="#16324a"/></svg>
      <svg class="tk"><use href="#tc"/></svg>
      <svg class="tk" viewBox="0 0 24 24"><rect width="24" height="24" fill="#4aa612"/><path d="M18 5H8v14h10" fill="none" stroke="#fff" stroke-width="4"/></svg>
      <div class="tray">
        <svg class="trayi" viewBox="0 0 14 14"><path d="M2 10l5-6 5 6" fill="none" stroke="#fff"/></svg>
        <svg class="trayi" viewBox="0 0 16 16"><rect x="5.500" y="4.500" width="10" height="8" fill="none" stroke="#fff"/><rect x="7" y="6" width="5" height="5" fill="#fff"/><path d="M1 5h3v4H1zM2.500 9v4M1.500 2v3M3.500 2v3" fill="none" stroke="#fff"/></svg>
        <svg class="trayi" viewBox="0 0 16 16"><path d="M3 12a4 4 0 0 1 1-7 5 5 0 0 1 8 3 3 3 0 0 1 0 6H5z" fill="#1270d8"/><circle cx="11" cy="12" r="3.500" fill="#fff"/><path d="M9 12a2 2 0 0 1 4 0" fill="none" stroke="#1270d8"/></svg>
        <svg class="trayi" viewBox="0 0 16 16"><path d="M5.500 1.500h10v10h-10zM1 1.500h4v8H1zM9 11.500v3M6 14.500h7" fill="none" stroke="#fff"/></svg>
        <span class="eng">ENG</span>
        <div class="clock"><span>11:19</span><span>06/02/2019</span></div>
        <div class="notif"><svg class="note" viewBox="0 0 16 16"><path d="M1 0h14v16H1z" fill="#fff"/><path d="M3 4h10M3 7h10M3 10h7" stroke="#333" stroke-width="1.300"/></svg><b class="badge">24</b></div>
      </div>
      <i class="running first"></i><i class="running second"></i>
    </footer>

    <div class="overlay-panel">
      <svg class="ov-tc"><use href="#tc"/></svg>
      <i class="ov-sep"></i>
      <svg class="ov-p" viewBox="0 0 16 16"><rect width="7" height="16" fill="#00b0ff"/><rect x="9" width="7" height="16" fill="#00b0ff"/></svg>
      <span class="ov-stop"><i></i></span>
    </div>
    <div class="tip"><div class="tip1">Waiting for Sys.Browser("*")</div><div>TestCompleteSeries</div></div>
    <svg class="pointer" viewBox="0 0 14 28"><path d="M1 1v19l4-4 3 8 3-1-3-8h6z" fill="#000" stroke="#fff"/></svg>
  </section>
</main>
</body>
</html>
```
FILE: styles.css
```css
* { box-sizing: border-box; }
html, body { margin: 0; height: 100%; }
body { width: 3840px; height: 1080px; overflow: hidden; background: #fff; color: #000; font: 11.400px/1 "Lato", "Liberation Sans", sans-serif; }
.defs { position: absolute; }
i, em { font-style: normal; }
svg { display: block; flex: none; }
.desktop { display: flex; width: 3840px; height: 1080px; }

/* splash */
.splash { width: 1920px; display: flex; align-items: center; justify-content: center; padding: 0 3px 36px 0; background: #fff; }
.brand { display: flex; flex-direction: column; align-items: center; }
.bear { width: 285px; height: 160px; }
.wordmark { margin-top: 16px; font: 500 45px/36px "Roboto", sans-serif; letter-spacing: 4.800px; color: #16324a; margin-right: -5px; }

/* app */
.app { width: 1920px; height: 1080px; position: relative; display: flex; flex-direction: column; background: #efefef; }
.i12 { width: 12px; height: 12px; }
.i14 { width: 14px; height: 14px; }
.i16 { width: 16px; height: 16px; }
.i24 { width: 24px; height: 24px; }
.title { height: 24px; background: #fff; display: flex; align-items: center; gap: 11px; padding-left: 1px; color: #8a8a8a; font: 11.300px/1 "Open Sans", sans-serif; flex: none; }
.winbtns { margin-left: auto; display: flex; gap: 33px; padding-right: 19px; }
.wb { width: 12px; height: 12px; }
.menubar { height: 24px; background: #fff; display: flex; align-items: center; padding-left: 5px; gap: 11px; border-bottom: 1px solid #a3a3a3; font: 11.300px/1 "Open Sans", sans-serif; flex: none; }
.grip { width: 2px; height: 24px; border-left: 2px dotted #c4c4c4; flex: none; }
.arr { width: 0; height: 0; border: 3px solid transparent; border-top: 3px solid #222; border-bottom: 0; flex: none; box-sizing: content-box; }
.arr.low { align-self: flex-end; margin-bottom: 6px; }
.sep { width: 1px; height: 28px; background: #8f8f8f; flex: none; }
.tools { height: 36px; background: #fff; border-bottom: 1px solid #d9d9d9; display: flex; align-items: center; gap: 7px; padding-left: 5px; font: 11.300px/1 "Open Sans", sans-serif; flex: none; }
.tt { color: #000; white-space: nowrap; }
.tight { margin-left: -3px; }
.gx { margin-left: 7px; }
.gxx { margin-left: 14px; }
.hot { background: #cce8ff; border: 1px solid #99d1ff; width: 30px; height: 31px; display: flex; align-items: center; justify-content: center; flex: none; }
.hot.small { width: 20px; height: 24px; }
.perspectives { height: 24px; display: flex; align-items: flex-end; border-bottom: 1px solid #d9d9d9; flex: none; }
.ptab { height: 17px; padding: 0 3px; display: flex; align-items: center; background: #f0f0f0; border: 1px solid #d9d9d9; border-bottom: 0; }
.ptab.on { height: 19px; background: #fff; padding: 0 5px 2px; }

.docks { height: 888px; display: flex; gap: 4px; padding: 1px 7px 0 3px; border-bottom: 1px solid #dcdcdc; flex: none; }
.left { width: 234px; display: flex; flex-direction: column; }
.right { flex: 1; display: flex; flex-direction: column; min-width: 0; }
.hdr { height: 22px; background: linear-gradient(#b8c8d8, #d6e3f0); display: flex; align-items: center; gap: 4px; padding-left: 4px; flex: none; }
.hbtns { margin-left: auto; display: flex; gap: 3px; align-items: center; padding-right: 3px; }
.hbtns.close { gap: 3px; padding-right: 5px; }
.hb { width: 27px; height: 15px; border: 1px solid #8c9db0; background: #d5e0ec; display: flex; align-items: center; justify-content: center; font-weight: 700; font-size: 11px; color: #555; }
.box { width: 9px; height: 7px; border: 1px solid #555; }
.x { width: 10px; height: 10px; }
.pin { width: 12px; height: 14px; }
.ptools { height: 36px; display: flex; align-items: center; gap: 8px; padding-left: 4px; flex: none; }
.tree { flex: 1; background: #fff; border: 1px solid #808080; position: relative; overflow: hidden; min-height: 0; }
.treelines, .gridlines { position: absolute; left: 0; top: 0; fill: none; stroke: #999; stroke-dasharray: 1 1; shape-rendering: crispEdges; }
.row { height: 19px; display: flex; align-items: center; white-space: nowrap; position: relative; }
.row > span { min-width: 0; overflow: hidden; line-height: 17px; }
.row > svg, .it > svg { margin-left: 6px; margin-right: 2px; }
.row b { letter-spacing: .5px; }
.l0 { padding-left: 6px; }
.l1 { padding-left: 25px; }
.l2 { padding-left: 44px; }
.l3 { padding-left: 63px; }
.tg { width: 9px; height: 9px; border: 1px solid #7f9db9; background: linear-gradient(#fff, #dfe7ef); flex: none; position: relative; }
.tg::before { content: ""; position: absolute; left: 1px; right: 1px; top: 3px; border-top: 1px solid #333; }
.tg::after { content: ""; position: absolute; left: 8px; top: 3px; width: 5px; border-top: 1px dotted #999; }
.tg.none { visibility: hidden; }
.sel { flex: 1; align-self: stretch; display: flex; align-items: center; background: #efefef; border: 1px dotted #111; }
.hscroll { position: absolute; left: 0; right: 0; bottom: 0; height: 15px; background: #f0f0f0; display: flex; align-items: center; }
.sa { width: 18px; text-align: center; font-size: 14px; color: #555; line-height: 15px; }
.sa.right { margin-left: auto; }
.thumb { width: 124px; height: 15px; background: #cdcdcd; }

.doctabs { height: 27px; display: flex; align-items: flex-end; padding-left: 2px; position: relative; flex: none; }
.dtab { height: 21px; display: flex; align-items: center; gap: 6px; padding: 0 6px 0 4px; background: #efefef; border: 1px solid #dcdcdc; border-bottom: 0; white-space: nowrap; }
.dtab.on { height: 23px; background: #fff; padding-bottom: 3px; }
.tabdrop { position: absolute; right: 3px; top: 6px; width: 12px; height: 13px; border: 1px solid #999; }
.editor { height: 591px; display: flex; gap: 3px; padding: 3px 8px 0 3px; border: 1px solid #e4e4e4; border-top-color: #fff; border-left-color: #fff; flex: none; }
.ops { width: 164px; display: flex; flex-direction: column; flex: none; }
.ophdr { height: 22px; background: linear-gradient(#b8c8d8, #d6e3f0); display: flex; align-items: center; justify-content: space-between; padding: 0 7px 0 4px; flex: none; }
.search { height: 21px; margin-top: 3px; background: #fff; border: 1px solid #808080; display: flex; align-items: center; padding-left: 3px; flex: none; }
.search em { font-style: italic; color: #777; flex: 1; }
.search .dd { width: 14px; height: 17px; margin: 0 1px 0 4px; background: #c8c8c8; }
.oplist { flex: 1; margin-top: 3px; background: #fff; border: 1px solid #808080; display: flex; flex-direction: column; min-height: 0; }
.opcat { height: 19px; padding-left: 8px; display: flex; align-items: center; flex: none; }
.op { height: 23px; padding-left: 6px; display: flex; align-items: center; gap: 5px; flex: none; }
.cats { margin-top: auto; }
.cats div { height: 17px; padding-left: 7px; display: flex; align-items: center; }

.kw { flex: 1; display: flex; flex-direction: column; min-width: 0; }
.kwtools { height: 35px; display: flex; align-items: center; gap: 6px; padding-left: 4px; border-bottom: 1px solid #fff; border-top: 1px solid #fff; flex: none; color: #a0a0a0; }
.kwtools .sep { height: 24px; background: #dcdcdc; }
.kb { display: flex; align-items: center; gap: 6px; padding-right: 2px; white-space: nowrap; }
.kwdesc { height: 62px; padding: 8px 5px 0; flex: none; }
.editrow { display: flex; justify-content: flex-end; margin-top: 9px; padding-right: 5px; }
.editbtn { width: 45px; height: 15px; background: #dedede; color: #9b9b9b; display: flex; align-items: center; justify-content: center; }
.grid { flex: 1; background: #fff; border: 1px solid #808080; min-height: 0; display: flex; flex-direction: column; }
.ghead, .gr { display: grid; grid-template-columns: 33px 364px 363px 364px 1fr; white-space: nowrap; }
.ghead { height: 20px; align-items: center; flex: none; }
.ghead > span:nth-child(2) { padding-left: 2px; }
.ghead .col { padding-left: 2px; align-self: stretch; display: flex; align-items: center; border-left: 1px solid #ececec; }
.gbody { position: relative; flex: 1; }
.gr { align-items: center; position: relative; }
.gr > span:nth-child(n+3) { padding-left: 2px; overflow: hidden; line-height: 17px; }
.h17 { height: 17px; }
.h18 { height: 18px; }
.h19 { height: 19px; }
.gc { align-self: stretch; margin-right: 1px; background: #efefef; border-bottom: 1px solid #9a9a9a; border-right: 1px solid #9a9a9a; display: flex; align-items: center; justify-content: center; }
.ghead .gc { background: #fff; border: 0; border-right: 1px solid #9a9a9a; }
.it { display: flex; align-items: center; }
.it > svg { margin-right: 3px; }
.it.l0 { padding-left: 6px; }
.it.l1 { padding-left: 25px; }
.it.l2 { padding-left: 44px; }
.it.l3 { padding-left: 63px; }
.cur > span:nth-child(n+3) { background: #efefef; align-self: stretch; display: flex; align-items: center; border-top: 1px dotted #111; border-bottom: 1px dotted #111; }
.cur .it > span { align-self: stretch; flex: 1; display: flex; align-items: center; border-top: 1px dotted #111; border-bottom: 1px dotted #111; border-left: 1px dotted #111; }

.subtabs { height: 23px; display: flex; align-items: flex-start; padding: 3px 0 0 2px; flex: none; }
.stab { height: 20px; display: flex; align-items: center; gap: 6px; padding: 0 6px 0 5px; border: 1px solid #dcdcdc; border-top: 0; white-space: nowrap; }
.stab.on { background: #fff; margin-right: 4px; }
.vis { margin-top: 8px; }
.stack { margin-top: 12px; }
.stackbox { height: 130px; margin-top: 2px; padding: 1px 3px; background: #fff; border: 1px solid #808080; flex: none; }
.btabs { height: 20px; margin-top: 4px; display: flex; flex: none; }
.btab { height: 18px; padding: 0 3px; border: 1px solid #dcdcdc; border-top: 0; display: flex; align-items: center; }
.btab.on { height: 20px; background: #fff; padding: 0 6px; }

.results { height: 24px; background: #fff; display: flex; align-items: flex-end; border-bottom: 1px solid #d9d9d9; flex: none; }
.rtab { height: 18px; padding: 0 8px; background: #f4f4f4; border: 1px solid #e0e0e0; border-bottom: 0; display: flex; align-items: center; }
.rtab.off { color: #9b9b9b; }
.status { height: 19px; display: flex; flex: none; color: #000; }
.st { border-right: 1px solid #d9d9d9; display: flex; align-items: center; gap: 8px; }
.st em { color: #a0a0a0; }
.w1 { width: 53px; }
.w2 { width: 54px; }
.w3 { width: 98px; padding-left: 3px; }
.w4 { width: 34px; }

.taskbar { height: 40px; background: #333; display: flex; align-items: center; gap: 25px; padding-left: 12px; position: relative; flex: none; }
.tk { width: 24px; height: 24px; }
.win10 { margin-right: 2px; }
.tray { margin-left: auto; display: flex; align-items: center; color: #f0f0f0; gap: 16px; padding-right: 13px; }
.trayi { width: 16px; height: 16px; }
.eng { font-size: 11px; margin-left: 1px; }
.clock { display: flex; flex-direction: column; align-items: center; gap: 7px; margin-left: -1px; }
.notif { position: relative; width: 28px; height: 28px; margin-left: 4px; }
.note { width: 16px; height: 16px; position: absolute; left: 5px; top: 2px; }
.badge { position: absolute; right: 0; bottom: -2px; width: 20px; height: 20px; border: 1px solid #aaa; border-radius: 50%; background: #333; color: #fff; display: flex; align-items: center; justify-content: center; font-size: 11px; }
.running { position: absolute; bottom: 0; height: 2px; width: 40px; background: #76b9ed; }
.first { left: 839px; }
.second { left: 888px; }

/* floating playback bar, tooltip and pointer lie over the window */
.overlay-panel { position: absolute; left: 1808px; top: 24px; width: 102px; height: 41px; background: #f0f0f0; border: 1px solid #b0b0b0; border-radius: 4px; display: flex; align-items: center; padding-left: 3px; }
.ov-tc { width: 32px; height: 32px; }
.ov-sep { width: 1px; height: 33px; margin-left: 4px; background: #aaa; }
.ov-p { width: 16px; height: 16px; margin-left: 8px; }
.ov-stop { width: 26px; height: 26px; margin-left: 5px; background: #c4c4c4; display: flex; align-items: center; justify-content: center; }
.ov-stop i { width: 16px; height: 16px; background: #00b0ff; border: 1px solid #9adfff; }
.tip { position: absolute; left: 1758px; top: 68px; width: 152px; height: 39px; background: #fff; border: 1px solid #666; text-align: right; padding: 5px 7px 0 3px; white-space: nowrap; font: 11.300px/1 "Open Sans", sans-serif; }
.tip1 { color: #111144; border-bottom: 1px solid #000; padding-bottom: 3px; margin-bottom: 4px; }
.pointer { position: absolute; left: 1892px; top: 48px; width: 14px; height: 28px; }
```
